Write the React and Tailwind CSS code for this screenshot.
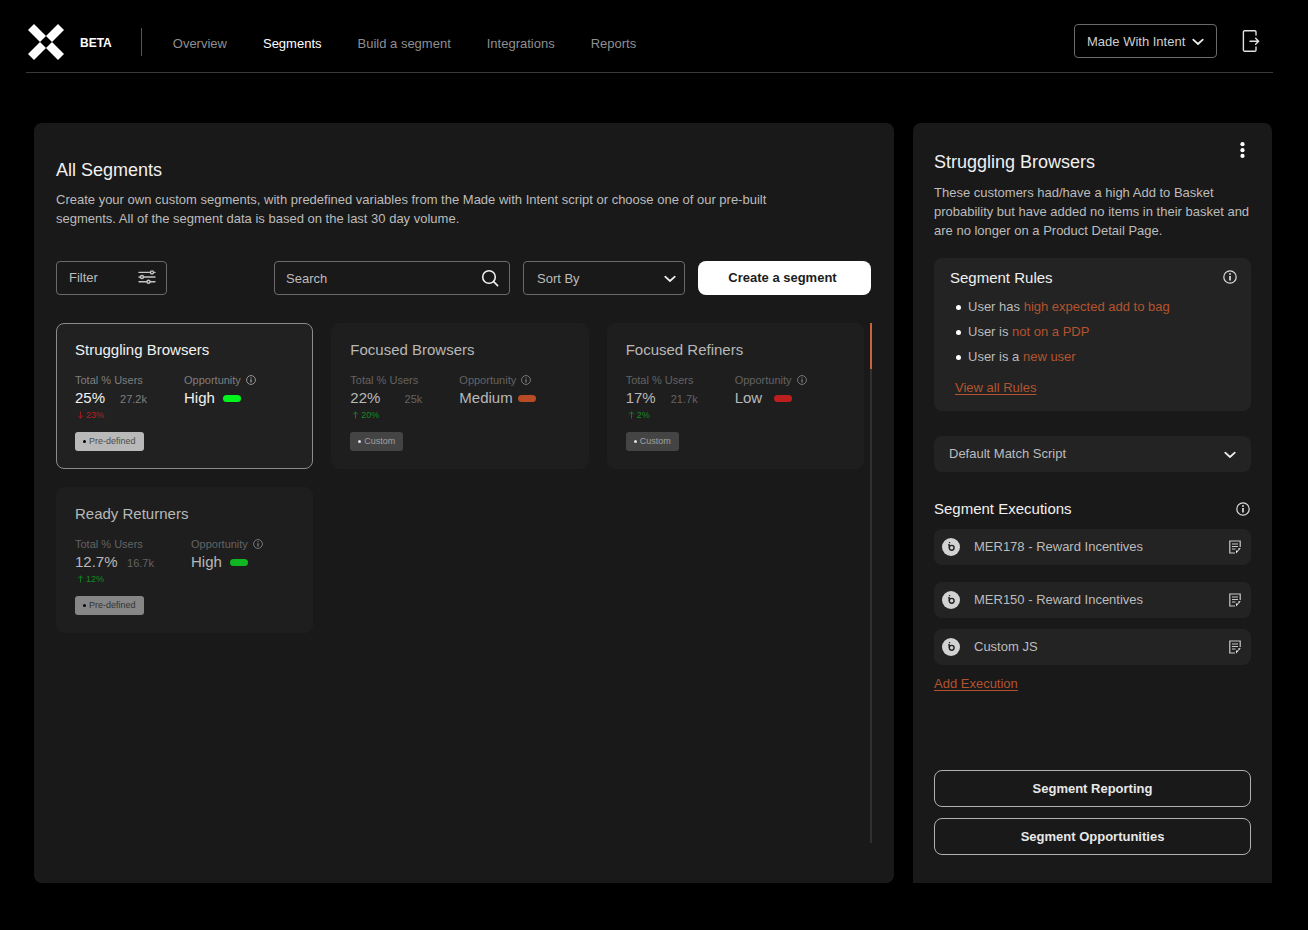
import { useState } from 'react'
import clsx from 'clsx'

const navItems = ['Overview', 'Segments', 'Build a segment', 'Integrations', 'Reports']

const segments = [
  { name: 'Struggling Browsers', percent: '25%', users: '27.2k', change: '23%', up: false, level: 'High', predefined: true, statWidth: 'w-[72px]' },
  { name: 'Focused Browsers', percent: '22%', users: '25k', change: '20%', up: true, level: 'Medium', predefined: false, statWidth: 'w-[72px]' },
  { name: 'Focused Refiners', percent: '17%', users: '21.7k', change: '2%', up: true, level: 'Low', predefined: false, statWidth: 'w-[72px]' },
  { name: 'Ready Returners', percent: '12.7%', users: '16.7k', change: '12%', up: true, level: 'High', predefined: true, statWidth: 'w-[79px]' },
]

const rules = [
  { text: 'User has', value: 'high expected add to bag' },
  { text: 'User is', value: 'not on a PDP' },
  { text: 'User is a', value: 'new user' },
]

const executions = [
  { name: 'MER178 - Reward Incentives', spacing: 'mt-[10px]' },
  { name: 'MER150 - Reward Incentives', spacing: 'mt-[17px]' },
  { name: 'Custom JS', spacing: 'mt-[11px]' },
]

function Logo() {
  return (
    <svg viewBox="0 0 36 36" className="size-9" fill="#fff" aria-hidden="true">
      <path d="M6 0 18 12 12 18 0 6Z" />
      <path d="M30 0 36 6 24 18 18 12Z" />
      <path d="M0 30 12 18 18 24 6 36Z" />
      <path d="M24 18 36 30 30 36 18 24Z" />
    </svg>
  )
}

function Chevron({ className }) {
  return (
    <svg viewBox="0 0 12 8" className={clsx('pointer-events-none h-2 w-3', className)} fill="none" stroke="#f0f0f0" strokeWidth="1.7" strokeLinecap="round" strokeLinejoin="round" aria-hidden="true">
      <path d="m1.2 1.7 4.8 4.3 4.8-4.3" />
    </svg>
  )
}

function InfoIcon({ className }) {
  return (
    <svg viewBox="0 0 14 14" className={className} fill="none" stroke="currentColor" strokeWidth="1.2" aria-hidden="true">
      <circle cx="7" cy="7" r="6.2" />
      <path d="M7 6v4.4" strokeWidth="1.7" />
      <circle cx="7" cy="4" r=".95" fill="currentColor" stroke="none" />
    </svg>
  )
}

function LogoutIcon() {
  return (
    <svg viewBox="0 0 18 24" className="h-6 w-[18px]" fill="none" stroke="#e0e0e0" strokeWidth="1.4" strokeLinecap="round" strokeLinejoin="round" aria-hidden="true">
      <path d="M14 6V3a1.2 1.2 0 0 0-1.2-1.2H2.6A1.2 1.2 0 0 0 1.4 3v18a1.2 1.2 0 0 0 1.2 1.2h10.2A1.2 1.2 0 0 0 14 21v-3" />
      <path d="M8 12.2h8.2M13.6 9.2l3 3-3 3" />
    </svg>
  )
}

function FilterIcon() {
  return (
    <svg viewBox="0 0 18 14" className="mb-[2px] h-[14px] w-[18px]" fill="#191919" stroke="#c4c4c4" strokeWidth="1.4" strokeLinecap="round" aria-hidden="true">
      <path d="M1 2.4h16M1 7h16M1 11.8h16" />
      <circle cx="14" cy="2.4" r="1.5" />
      <circle cx="4" cy="7" r="1.5" />
      <circle cx="10.5" cy="11.8" r="1.5" />
    </svg>
  )
}

function SearchIcon() {
  return (
    <svg viewBox="0 0 18 18" className="pointer-events-none absolute top-2 right-[11px] size-[18px]" fill="none" stroke="#f0f0f0" strokeWidth="1.6" strokeLinecap="round" aria-hidden="true">
      <circle cx="8" cy="8" r="6.3" />
      <path d="m12.6 12.6 4 4" />
    </svg>
  )
}

function ProviderIcon() {
  return (
    <svg viewBox="0 0 18 18" className="size-[18px] shrink-0" aria-hidden="true">
      <circle cx="9" cy="9" r="9" fill="#d2d2d2" />
      <circle cx="9.7" cy="9.8" r="2.4" fill="none" stroke="#222" strokeWidth="1.4" />
      <path d="M7.3 7v3M6 6.9h2M6.9 4.6h1.3" stroke="#222" strokeWidth="1.3" />
    </svg>
  )
}

function NoteIcon() {
  return (
    <svg viewBox="0 0 12 14" className="h-[14px] w-3" fill="none" stroke="#c8c8c8" strokeWidth="1.2" aria-hidden="true">
      <path d="M11.2 7V1H.8v12H6" />
      <path d="M3 4h6M3 6.5h6M3 9h3.5" strokeWidth="1" />
      <path d="M11.8 8.2 7 13.6V10.4h2.4V8.2Z" fill="#f0f0f0" stroke="none" />
    </svg>
  )
}

function ArrowIcon({ up }) {
  return (
    <svg viewBox="0 0 7 8" className={clsx('h-2 w-[7px]', !up && 'rotate-180')} fill="none" stroke="currentColor" strokeWidth=".8" aria-hidden="true">
      <path d="M3.5 7.5V1M1 3.3 3.5 1 6 3.3" />
    </svg>
  )
}

function Header() {
  return (
    <header className="mr-[35px] ml-[26px] flex h-[73px] items-center border-b border-[#3a3a3a] pt-3 pl-[2px]">
      <Logo />
      <span className="ml-4 pt-[2px] text-xs font-bold text-white">BETA</span>
      <span className="ml-[29px] h-7 w-px bg-[#555]" />
      <nav className="mr-auto ml-[31px] flex gap-9 pt-[3px] text-[13px]">
        {navItems.map((item) => (
          <a key={item} href="#" className={item === 'Segments' ? 'text-white' : 'text-[#8f8f8f]'}>
            {item}
          </a>
        ))}
      </nav>
      <div className="relative mb-[2px]">
        <select aria-label="Account" className="h-[34px] w-[143px] appearance-none rounded border border-[#6a6a6a] bg-black pt-px pl-3 text-[13px] text-[#cfcfcf]">
          <option>Made With Intent</option>
        </select>
        <Chevron className="absolute top-[14px] right-[13px]" />
      </div>
      <button type="button" aria-label="Log out" className="mr-[13px] mb-[2px] ml-[25px]">
        <LogoutIcon />
      </button>
    </header>
  )
}

function SegmentCard({ segment, selected, onSelect }) {
  const { name, percent, users, change, up, level, predefined, statWidth } = segment

  return (
    <button
      type="button"
      onClick={onSelect}
      className={clsx(
        'rounded-lg border px-[18px] pt-4 pb-[17px] text-left',
        selected ? 'border-[#8c8c8c] bg-[#212121] text-[#f2f2f2]' : 'border-[#1e1e1e] bg-[#1e1e1e] text-[#b8b8b8]'
      )}
    >
      <h2 className="text-[15px] leading-5">{name}</h2>
      <div className="mt-3 flex gap-[37px]">
        <div className={statWidth}>
          <p className={clsx('text-[11px] leading-4 whitespace-nowrap', selected ? 'text-[#7f7f7f]' : 'text-[#636363]')}>Total % Users</p>
          <p className="flex items-baseline justify-between text-[15px] leading-5">
            {percent}
            <span className={clsx('text-[11px]', selected ? 'text-[#7f7f7f]' : 'text-[#636363]')}>{users}</span>
          </p>
        </div>
        <div>
          <p className={clsx('flex items-center gap-[5px] text-[11px] leading-4', selected ? 'text-[#7f7f7f]' : 'text-[#636363]')}>
            Opportunity
            <InfoIcon className={clsx('size-[10px]', selected ? 'text-[#a8a8a8]' : 'text-[#858585]')} />
          </p>
          <p className="flex items-center gap-[5px] text-[15px] leading-5">
            <span className="min-w-[34px]">{level}</span>
            <span
              className={clsx(
                'h-[7px] w-[18px] rounded-full',
                level === 'High' && (selected ? 'bg-[#00f51d]' : 'bg-[#0fb822]'),
                level === 'Medium' && 'bg-[#b84a25]',
                level === 'Low' && 'bg-[#bd1e1e]'
              )}
            />
          </p>
        </div>
      </div>
      <p className={clsx('flex items-center gap-[2px] pl-[2px] text-[9px] leading-3', up ? 'text-[#128a22]' : 'text-[#b52222]')}>
        <ArrowIcon up={up} />
        {change}
      </p>
      <span
        className={clsx(
          'mt-[11px] flex h-[19px] w-fit items-center gap-[3px] rounded-[3px] px-2 text-[9px]',
          !predefined && 'bg-[#444] text-[#a0a0a0]',
          predefined && (selected ? 'bg-[#b9b9b9] text-[#4d4d4d]' : 'bg-[#868686] text-[#333]')
        )}
      >
        <span className={clsx('size-[3px] rounded-full', predefined ? 'bg-black' : 'bg-[#e0e0e0]')} />
        {predefined ? 'Pre-defined' : 'Custom'}
      </span>
    </button>
  )
}

function SegmentList() {
  const [selected, setSelected] = useState('Struggling Browsers')

  return (
    <section className="flex min-w-0 flex-1 flex-col rounded-lg bg-[#191919] px-[22px] pt-[35px] pb-10">
      <h1 className="text-lg leading-6 text-[#f0f0f0]">All Segments</h1>
      <p className="mt-2 max-w-[740px] text-[13px] leading-[19px] text-[#bcbcbc]">
        Create your own custom segments, with predefined variables from the Made with Intent script or choose one of our pre-built segments. All of the segment data is based on the last 30 day volume.
      </p>

      {/* Toolbar */}
      <div className="mt-[33px] mr-px flex gap-[13px] text-[13px] text-[#bcbcbc]">
        <button type="button" className="mr-auto flex h-[34px] w-[111px] items-center justify-between rounded border border-[#6a6a6a] pr-[10px] pl-3">
          Filter
          <FilterIcon />
        </button>
        <div className="relative">
          <input type="text" aria-label="Search" placeholder="Search" className="h-[34px] w-[236px] rounded border border-[#6a6a6a] bg-transparent pr-10 pl-[11px] placeholder:text-[#bcbcbc]" />
          <SearchIcon />
        </div>
        <div className="relative">
          <select aria-label="Sort by" className="h-[34px] w-[162px] appearance-none rounded border border-[#6a6a6a] bg-[#191919] pt-px pl-[13px]">
            <option>Sort By</option>
          </select>
          <Chevron className="absolute top-[14px] right-[9px]" />
        </div>
        <button type="button" className="h-[34px] w-[173px] rounded-lg bg-white pr-1 font-bold text-[#1c1c1c]">
          Create a segment
        </button>
      </div>

      {/* Cards with the scroll track beside them */}
      <div className="mt-7 flex flex-1 gap-[6px]">
        <div className="grid flex-1 grid-cols-3 content-start gap-[18px]">
          {segments.map((segment) => (
            <SegmentCard
              key={segment.name}
              segment={segment}
              selected={segment.name === selected}
              onSelect={() => setSelected(segment.name)}
            />
          ))}
        </div>
        <div className="w-[2px] bg-[#303030]">
          <div className="h-[46px] bg-[#c8643a]" />
        </div>
      </div>
    </section>
  )
}

function SegmentDetails() {
  return (
    <aside className="flex w-[359px] shrink-0 flex-col rounded-t-lg bg-[#191919] px-[21px] pt-[27px] pb-7 text-[13px] text-[#bcbcbc]">
      <div className="flex items-start justify-between">
        <h2 className="text-lg leading-6 text-[#f0f0f0]">Struggling Browsers</h2>
        <button type="button" aria-label="More options" className="-mt-2 mr-[6px]">
          <svg viewBox="0 0 5 16" className="h-4 w-[5px]" fill="#fff" aria-hidden="true">
            <circle cx="2.5" cy="2.2" r="2.1" />
            <circle cx="2.5" cy="8.2" r="2.1" />
            <circle cx="2.5" cy="13.9" r="2.1" />
          </svg>
        </button>
      </div>
      <p className="mt-[9px] leading-[19px]">
        These customers had/have a high Add to Basket probability but have added no items in their basket and are no longer on a Product Detail Page.
      </p>

      <div className="mt-[18px] rounded-lg bg-[#232323] px-4 pt-[10px] pb-[13px]">
        <div className="flex items-center justify-between">
          <h3 className="text-[15px] leading-5 text-[#f0f0f0]">Segment Rules</h3>
          <InfoIcon className="-mr-[2px] mb-[2px] size-[14px] text-[#dcdcdc]" />
        </div>
        <ul className="mt-[9px] space-y-[5px] pl-[6px] leading-5">
          {rules.map((rule) => (
            <li key={rule.value} className="flex items-center">
              <span className="mr-[7px] size-[5px] rounded-full bg-white" />
              <span>
                {rule.text} <span className="text-[#b4532f]">{rule.value}</span>
              </span>
            </li>
          ))}
        </ul>
        <a href="#" className="mt-[11px] ml-[5px] block w-fit leading-5 text-[#b4532f] underline underline-offset-2">View all Rules</a>
      </div>

      <div className="relative mt-[25px]">
        <select aria-label="Match script" className="h-9 w-full appearance-none rounded-lg bg-[#232323] pl-[15px]">
          <option>Default Match Script</option>
        </select>
        <Chevron className="absolute top-[15px] right-[15px]" />
      </div>

      <div className="mt-[27px] flex items-center justify-between">
        <h3 className="text-[15px] leading-5 text-[#f0f0f0]">Segment Executions</h3>
        <InfoIcon className="mr-px size-[14px] text-[#dcdcdc]" />
      </div>
      <ul>
        {executions.map((execution) => (
          <li key={execution.name} className={clsx('flex h-9 items-center rounded-lg bg-[#232323] pr-[10px] pl-2', execution.spacing)}>
            <ProviderIcon />
            <span className="mr-auto ml-[14px]">{execution.name}</span>
            <button type="button" aria-label={`Edit ${execution.name}`}>
              <NoteIcon />
            </button>
          </li>
        ))}
      </ul>
      <a href="#" className="mt-[9px] w-fit leading-5 text-[#b4532f] underline underline-offset-2">Add Execution</a>

      <div className="mt-auto flex flex-col gap-[11px] font-bold text-[#e8e8e8]">
        <button type="button" className="h-[37px] rounded-lg border border-[#b0b0b0]">Segment Reporting</button>
        <button type="button" className="h-[37px] rounded-lg border border-[#b0b0b0]">Segment Opportunities</button>
      </div>
    </aside>
  )
}

export default function App() {
  return (
    <div className="flex min-h-screen flex-col bg-black font-['Liberation_Sans',Arial,sans-serif]">
      <Header />
      <main className="mt-[50px] mr-9 mb-[47px] ml-[34px] flex flex-1 gap-[19px]">
        <SegmentList />
        <SegmentDetails />
      </main>
    </div>
  )
}
